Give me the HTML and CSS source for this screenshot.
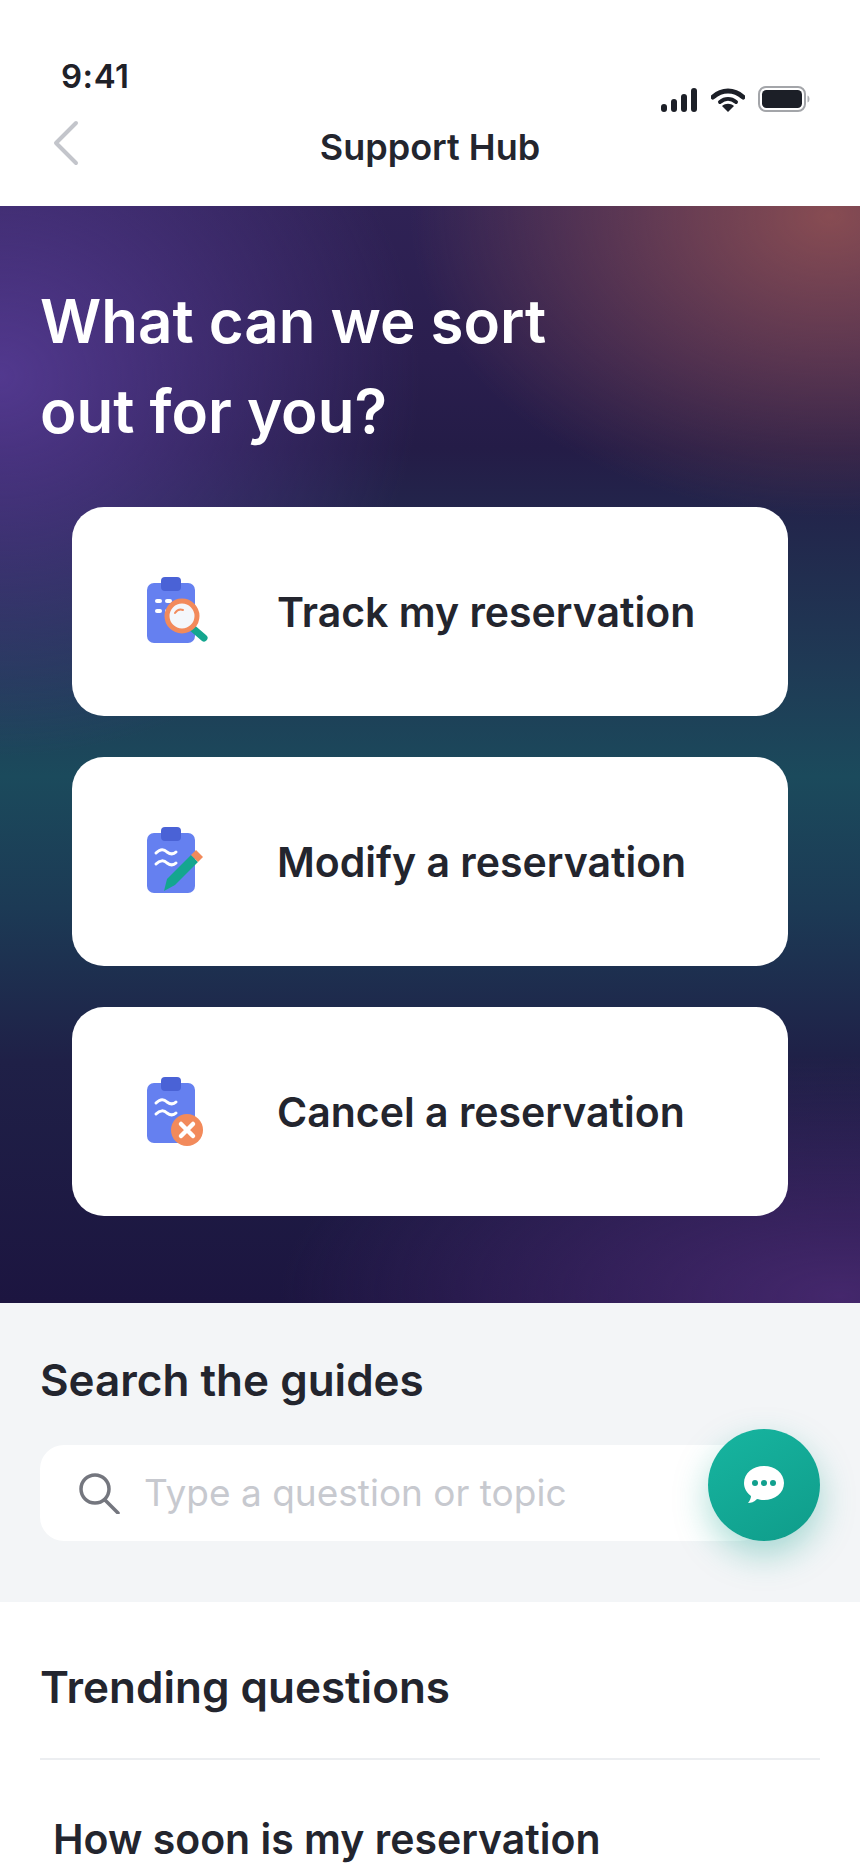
FILE: index.html
```html
<!DOCTYPE html>
<html lang="en">
<head>
<meta charset="utf-8">
<title>Support Hub</title>
<link rel="stylesheet" href="styles.css">
</head>
<body>
<div class="app">
  <header class="top">
    <div class="status">
      <span class="time">9:41</span>
      <div class="status-icons">
        <svg width="37" height="24" viewBox="0 0 37 24"><g fill="#1c1f27"><rect x="0" y="16" width="6" height="8" rx="3"/><rect x="10" y="11" width="6" height="13" rx="3"/><rect x="20" y="6" width="6" height="18" rx="3"/><rect x="30" y="0" width="6" height="24" rx="3"/></g></svg>
        <svg width="34" height="24" viewBox="0 0 34 24"><path d="M2 9C11 1 23 1 32 9" fill="none" stroke="#1c1f27" stroke-width="5" stroke-linecap="round"/><path d="M9 14C14 10 20 10 25 14" fill="none" stroke="#1c1f27" stroke-width="4" stroke-linecap="round"/><path d="M11 18C14.500 15 19.500 15 23 18L17 24Z" fill="#1c1f27"/></svg>
        <svg width="52" height="26" viewBox="0 0 52 26"><rect x="1" y="1" width="46" height="24" rx="7" fill="none" stroke="#a3a5a9" stroke-width="2"/><rect x="4" y="4" width="40" height="18" rx="4.500" fill="#1c1f27"/><path d="M49.500 9.500C51 10 51.500 11.500 51.500 13C51.500 14.500 51 16 49.500 16.500Z" fill="#b0b2b6"/></svg>
      </div>
    </div>
    <nav class="navbar">
      <svg class="back" width="28" height="46" viewBox="0 0 28 46"><path d="M24 3L4 23L24 43" fill="none" stroke="#c3c5cb" stroke-width="4" stroke-linecap="round" stroke-linejoin="round"/></svg>
      <h1 class="nav-title">Support Hub</h1>
    </nav>
  </header>

  <section class="hero">
    <h2 class="hero-title">What can we sort<br>out for you?</h2>
    <div class="cards">
      <a class="card">
        <svg class="card-icon" width="64" height="70" viewBox="0 0 64 70">
          <rect x="0" y="6" width="48" height="60" rx="7" fill="#6580f0"/>
          <rect x="14" y="0" width="20" height="14" rx="4" fill="#4a62d6"/>
          <rect x="8" y="22" width="7" height="4" rx="2" fill="#fff"/><rect x="18" y="22" width="7" height="4" rx="2" fill="#fff"/><rect x="8" y="32" width="7" height="4" rx="2" fill="#fff"/><rect x="18" y="32" width="7" height="4" rx="2" fill="#fff"/>
          <path d="M43 49L57 61" stroke="#14a68f" stroke-width="7" stroke-linecap="round"/>
          <circle cx="35" cy="39" r="15" fill="#f4f7fb" stroke="#f28a5b" stroke-width="5"/>
          <path d="M28 36C30 33 33 32 36 33" fill="none" stroke="#f28a5b" stroke-width="2" stroke-linecap="round"/>
        </svg>
        <span class="card-label">Track my reservation</span>
      </a>
      <a class="card">
        <svg class="card-icon" width="64" height="70" viewBox="0 0 64 70">
          <rect x="0" y="6" width="48" height="60" rx="7" fill="#6580f0"/>
          <rect x="14" y="0" width="20" height="14" rx="4" fill="#4a62d6"/>
          <path d="M9 26C13 22 17 22 20 25C24 28 27 27 29 25M9 37C13 33 17 33 20 36C24 39 27 38 29 36" fill="none" stroke="#fff" stroke-width="3" stroke-linecap="round"/>
          <path d="M17 64L20 52L44 28L51 35L28 58Z" fill="#14a68f"/>
          <path d="M44 28L49 23L56 30L51 35Z" fill="#f28a5b"/>
        </svg>
        <span class="card-label">Modify a reservation</span>
      </a>
      <a class="card">
        <svg class="card-icon" width="64" height="70" viewBox="0 0 64 70">
          <rect x="0" y="6" width="48" height="60" rx="7" fill="#6580f0"/>
          <rect x="14" y="0" width="20" height="14" rx="4" fill="#4a62d6"/>
          <path d="M9 26C13 22 17 22 20 25C24 28 27 27 29 25M9 37C13 33 17 33 20 36C24 39 27 38 29 36" fill="none" stroke="#fff" stroke-width="3" stroke-linecap="round"/>
          <circle cx="40" cy="53" r="16" fill="#f28a5b"/>
          <path d="M34 47L46 59M46 47L34 59" stroke="#fff" stroke-width="4.500" stroke-linecap="round"/>
        </svg>
        <span class="card-label">Cancel a reservation</span>
      </a>
    </div>
  </section>

  <section class="search-section">
    <h2 class="section-title">Search the guides</h2>
    <div class="search-row">
      <div class="search-box">
        <svg width="42" height="42" viewBox="0 0 42 42"><circle cx="17" cy="17" r="14" fill="none" stroke="#74767e" stroke-width="3.500"/><path d="M27 28L40 41" stroke="#74767e" stroke-width="3.500" stroke-linecap="round"/></svg>
        <span class="placeholder">Type a question or topic</span>
      </div>
      <button class="fab" aria-label="Chat">
        <svg width="40" height="38" viewBox="0 0 40 38"><path d="M20 0C31 0 40 7 40 17C40 27 31 34 20 34C17 34 15 33.500 13 33C10 36 7 37 4 37C6 34.500 7 32 7 30C3 27 0 22.500 0 17C0 7 9 0 20 0Z" fill="#fff"/><circle cx="11" cy="17" r="3" fill="#11a08e"/><circle cx="20" cy="17" r="3" fill="#11a08e"/><circle cx="29" cy="17" r="3" fill="#11a08e"/></svg>
      </button>
    </div>
  </section>

  <section class="trending">
    <h2 class="section-title trending-title">Trending questions</h2>
    <div class="faq">How soon is my reservation</div>
  </section>
</div>
</body>
</html>
```
FILE: styles.css
```css
* { box-sizing: border-box; }
html, body { margin: 0; padding: 0; }
body {
  width: 860px;
  height: 1864px;
  overflow: hidden;
  background: #fff;
  font-family: Inter, "Liberation Sans", sans-serif;
  color: #23252e;
}
h1, h2 { margin: 0; }
.app { display: flex; flex-direction: column; height: 1864px; overflow: hidden; }

.top { height: 208px; background: #fff; padding-top: 56px; }
.status { display: flex; justify-content: space-between; padding: 0 50px 0 61px; height: 50px; }
.time { font-size: 33px; font-weight: 600; line-height: 40px; letter-spacing: 0.5px; color: #1f2128; }
.status-icons { display: flex; align-items: flex-end; gap: 13px; padding-bottom: 0; height: 40px; margin-top: 16px; }
.navbar { position: relative; height: 102px; display: flex; align-items: center; justify-content: center; margin-top: -10px; }
.back { position: absolute; left: 52px; top: 24px; }
.nav-title { font-size: 36px; font-weight: 600; line-height: 44px; letter-spacing: 0; color: #23252e; }

.hero {
  height: 1110px;
  padding: 70px 72px 0 40px;
  color: #fff;
  background:
    radial-gradient(ellipse 420px 300px at 830px 10px, rgba(140,78,82,.95), rgba(140,78,82,0) 100%),
    radial-gradient(ellipse 420px 380px at 0px 170px, rgba(84,58,146,.95), rgba(84,58,146,0) 100%),
    radial-gradient(ellipse 560px 240px at 840px 1090px, rgba(70,40,110,.95), rgba(70,40,110,0) 100%),
    linear-gradient(180deg, #2f2255 0%, #2a1e4e 14%, #241c47 22%, #1f3a55 42%, #1b4a5c 52%, #1c3a55 64%, #1f2047 78%, #1c1540 100%);
}
.hero-title { font-size: 60px; font-weight: 600; line-height: 90px; letter-spacing: 0; color: #fff; }
.cards { display: flex; flex-direction: column; gap: 41px; margin: 51px 0 0 32px; }
.card {
  display: flex;
  align-items: center;
  height: 209px;
  background: #fff;
  border-radius: 32px;
  padding-left: 75px;
}
.card-icon { flex: none; }
.card-label { margin-left: 66px; font-size: 41px; font-weight: 600; line-height: 50px; color: #23252e; }

.search-section { height: 302px; background: #f3f5f7; padding: 50px 40px 0; }
.section-title { font-size: 44px; font-weight: 600; line-height: 54px; color: #23252e; }
.search-row { position: relative; margin-top: 38px; }
.search-box {
  display: flex;
  align-items: center;
  gap: 24px;
  width: 724px;
  height: 96px;
  background: #fff;
  border-radius: 24px;
  padding-left: 38px;
}
.placeholder { font-size: 37px; font-weight: 400; color: #c7c9cf; line-height: 46px; }
.fab {
  position: absolute;
  right: 0;
  top: -16px;
  width: 112px;
  height: 112px;
  border: 0;
  border-radius: 50%;
  padding: 0;
  display: flex;
  align-items: center;
  justify-content: center;
  background: linear-gradient(150deg, #17b5a0, #0f9c8a);
  box-shadow: 0 14px 34px rgba(18,160,140,.35);
}

.trending { padding: 58px 40px 0; background: #fff; flex: 1; }
.trending-title { padding-bottom: 44px; border-bottom: 2px solid #eceef1; line-height: 54px; }
.faq { margin: 54px 0 0 13px; font-size: 41px; font-weight: 600; line-height: 50px; color: #23252e; }
```
